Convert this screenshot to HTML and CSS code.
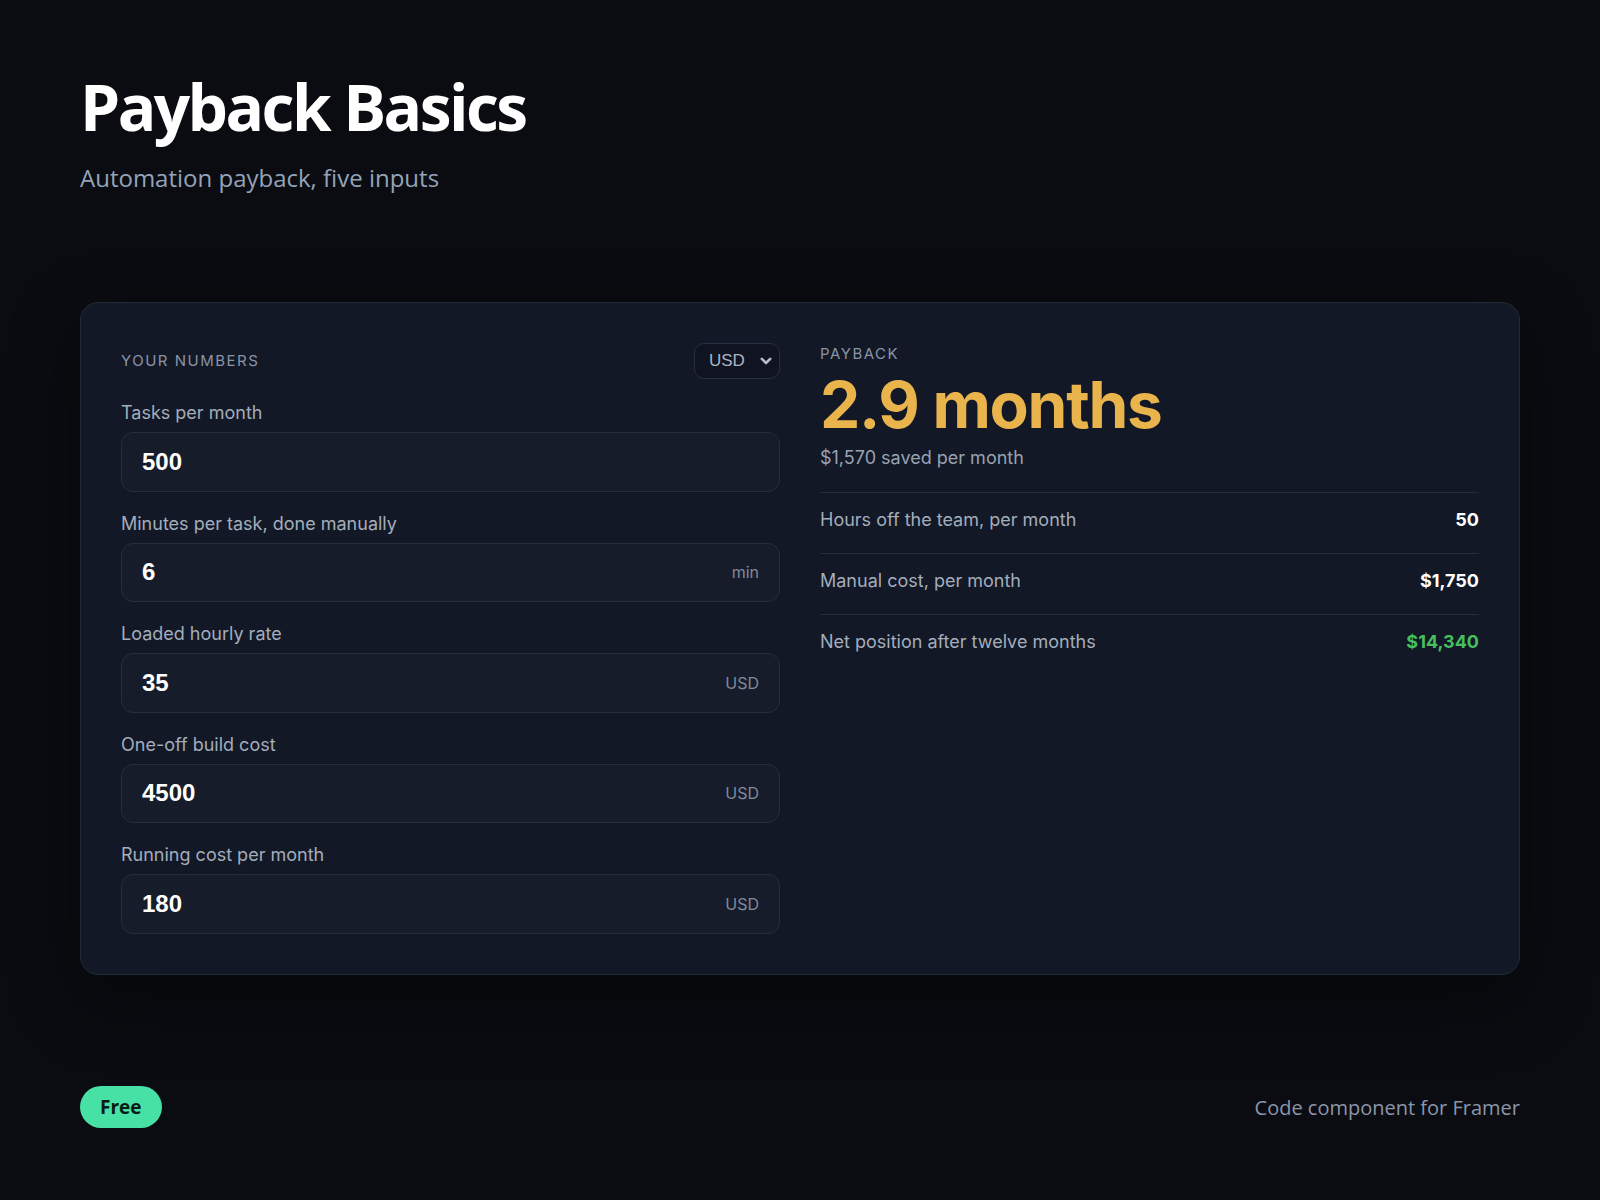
FILE: index.html
```html
<!DOCTYPE html>
<html lang="en">
<head>
<meta charset="utf-8">
<title>Payback Basics</title>
<link rel="stylesheet" href="styles.css">
</head>
<body>
<div class="page">
  <header class="hero">
    <h1 class="title">Payback Basics</h1>
    <p class="subtitle">Automation payback, five inputs</p>
  </header>

  <section class="card">
    <div class="col inputs">
      <div class="col-head">
        <span class="eyebrow">YOUR NUMBERS</span>
        <div class="select">
          <span>USD</span>
          <svg class="chev" width="12" height="8" viewBox="0 0 12 8"><path d="M1.8 1.8l4.2 4.2 4.2-4.2" fill="none" stroke="currentColor" stroke-width="2.6" stroke-linecap="round" stroke-linejoin="round"/></svg>
        </div>
      </div>
      <div class="field">
        <label class="label">Tasks per month</label>
        <div class="input"><span class="val">500</span></div>
      </div>
      <div class="field">
        <label class="label">Minutes per task, done manually</label>
        <div class="input"><span class="val">6</span><span class="unit">min</span></div>
      </div>
      <div class="field">
        <label class="label">Loaded hourly rate</label>
        <div class="input"><span class="val">35</span><span class="unit">USD</span></div>
      </div>
      <div class="field">
        <label class="label">One-off build cost</label>
        <div class="input"><span class="val">4500</span><span class="unit">USD</span></div>
      </div>
      <div class="field">
        <label class="label">Running cost per month</label>
        <div class="input"><span class="val">180</span><span class="unit">USD</span></div>
      </div>
    </div>

    <div class="col result">
      <span class="eyebrow">PAYBACK</span>
      <div class="big">2.9 months</div>
      <div class="saved">$1,570 saved per month</div>
      <div class="rows">
        <div class="row"><span>Hours off the team, per month</span><strong>50</strong></div>
        <div class="row"><span>Manual cost, per month</span><strong>$1,750</strong></div>
        <div class="row"><span>Net position after twelve months</span><strong class="pos">$14,340</strong></div>
      </div>
    </div>
  </section>

  <footer class="foot">
    <span class="pill">Free</span>
    <span class="credit">Code component for Framer</span>
  </footer>
</div>
</body>
</html>
```

FILE: styles.css
```css
* { box-sizing: border-box; }
html, body { margin: 0; padding: 0; }
body {
  background: #0a0c11;
  color: #f3f5f8;
  font-family: "Open Sans", "Noto Sans", sans-serif;
}
.page {
  height: 1200px;
  padding: 72px 80px;
  display: flex;
  flex-direction: column;
}
.hero { margin: 0; }
.title {
  margin: 0;
  font-size: 64px;
  line-height: 70px;
  font-weight: 700;
  letter-spacing: -0.04em;
  color: #ffffff;
}
.subtitle {
  margin: 20px 0 0;
  font-size: 24px;
  line-height: 32px;
  color: #94a3b8;
}
.card {
  margin-top: 108px;
  background: #121826;
  border: 1px solid #222a38;
  border-radius: 18px;
  padding: 40px;
  display: grid;
  grid-template-columns: 1fr 1fr;
  column-gap: 40px;
  box-shadow: 0 24px 70px rgba(0, 0, 0, 0.45);
  font-family: "Inter", "Roboto", sans-serif;
}
.col { display: flex; flex-direction: column; }
.col-head {
  display: flex;
  align-items: center;
  justify-content: space-between;
  height: 36px;
  margin-bottom: 22px;
}
.eyebrow {
  font-size: 15px;
  letter-spacing: 0.1em;
  color: #8a94a6;
  line-height: 18px;
}
.select {
  height: 36px;
  width: 86px;
  border: 1px solid #263042;
  border-radius: 10px;
  background: #0f1420;
  display: flex;
  align-items: center;
  justify-content: space-between;
  padding: 0 7px 0 14px;
  font-family: "Liberation Sans", Arial, sans-serif;
  font-size: 17px;
  color: #aab4c4;
}
.chev { color: #b4bdca; }
.field { display: flex; flex-direction: column; margin-bottom: 20px; }
.field:last-child { margin-bottom: 0; }
.label {
  font-size: 18px;
  line-height: 24px;
  color: #a3adbb;
  margin-bottom: 7px;
}
.input {
  height: 59.5px;
  border: 1px solid #252e3d;
  border-radius: 12px;
  background: #161c2a;
  display: flex;
  align-items: center;
  justify-content: space-between;
  padding: 0 20px;
}
.val {
  font-family: "Liberation Sans", Arial, sans-serif;
  font-size: 24px;
  font-weight: 700;
  color: #ffffff;
}
.unit {
  font-size: 16px;
  color: #7f8a9c;
}
.result { padding-top: 2px; }
.result .eyebrow { margin-bottom: 7px; }
.big {
  font-size: 64px;
  line-height: 70px;
  font-weight: 700;
  letter-spacing: -0.02em;
  color: #e9b44c;
}
.saved {
  margin-top: 6px;
  font-size: 18px;
  line-height: 24px;
  color: #98a2b2;
}
.rows { margin-top: 22px; }
.row {
  display: flex;
  justify-content: space-between;
  align-items: center;
  border-top: 1px solid #252d3b;
  padding: 14px 0 21px;
  line-height: 25px;
  font-size: 18px;
  color: #a3adbb;
}
.row strong { font-weight: 700; color: #ffffff; }
.row strong.pos { color: #46bf5e; }
.foot {
  margin-top: auto;
  display: flex;
  align-items: center;
  justify-content: space-between;
}
.pill {
  display: inline-flex;
  align-items: center;
  justify-content: center;
  height: 42px;
  padding: 0 20px;
  border-radius: 999px;
  background: #47e0a5;
  color: #0a1a14;
  font-weight: 700;
  font-size: 19px;
}
.credit {
  font-size: 20px;
  color: #8a96aa;
}
```
